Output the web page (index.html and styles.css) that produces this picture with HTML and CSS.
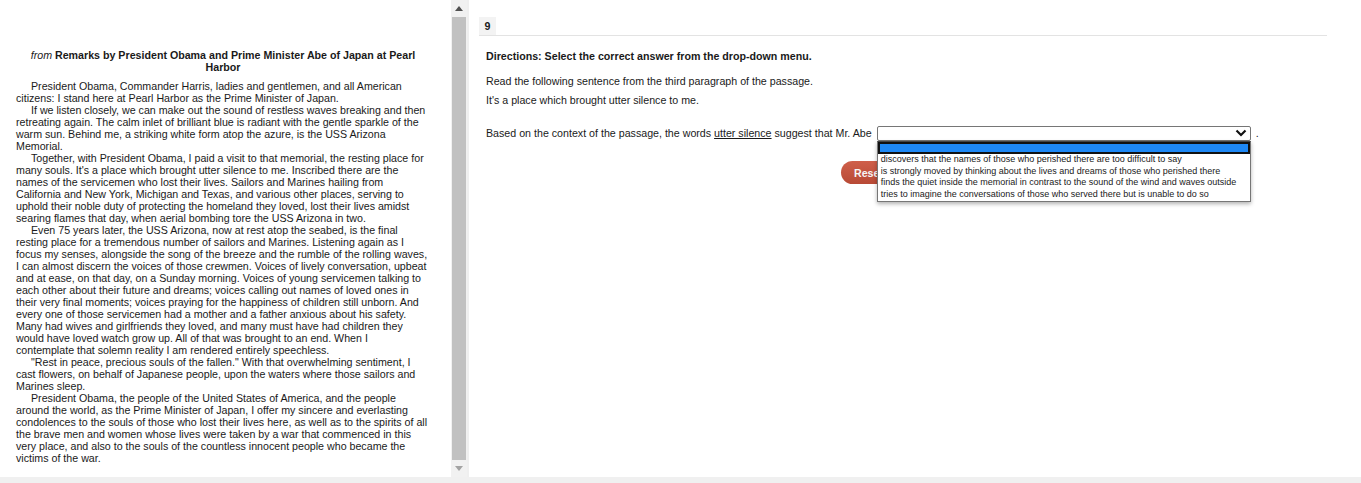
FILE: index.html
```html
<!DOCTYPE html>
<html lang="en">
<head>
  <meta charset="UTF-8">
  <title>Question 9</title>
  <link rel="stylesheet" href="styles.css">
</head>

<body>

<div class="panes">

  <!-- Reading passage -->
  <div class="passage-pane">
    <div class="passage">
      <h2 class="passage-title"><em>from</em> Remarks by President Obama and Prime Minister Abe of Japan at Pearl Harbor</h2>
      <p>President Obama, Commander Harris, ladies and gentlemen, and all American citizens: I stand here at Pearl Harbor as the Prime Minister of Japan.</p>
      <p>If we listen closely, we can make out the sound of restless waves breaking and then retreating again. The calm inlet of brilliant blue is radiant with the gentle sparkle of the warm sun. Behind me, a striking white form atop the azure, is the USS Arizona Memorial.</p>
      <p>Together, with President Obama, I paid a visit to that memorial, the resting place for many souls. It's a place which brought utter silence to me. Inscribed there are the names of the servicemen who lost their lives. Sailors and Marines hailing from California and New York, Michigan and Texas, and various other places, serving to uphold their noble duty of protecting the homeland they loved, lost their lives amidst searing flames that day, when aerial bombing tore the USS Arizona in two.</p>
      <p>Even 75 years later, the USS Arizona, now at rest atop the seabed, is the final resting place for a tremendous number of sailors and Marines. Listening again as I focus my senses, alongside the song of the breeze and the rumble of the rolling waves, I can almost discern the voices of those crewmen. Voices of lively conversation, upbeat and at ease, on that day, on a Sunday morning. Voices of young servicemen talking to each other about their future and dreams; voices calling out names of loved ones in their very final moments; voices praying for the happiness of children still unborn. And every one of those servicemen had a mother and a father anxious about his safety. Many had wives and girlfriends they loved, and many must have had children they would have loved watch grow up. All of that was brought to an end. When I contemplate that solemn reality I am rendered entirely speechless.</p>
      <p>"Rest in peace, precious souls of the fallen." With that overwhelming sentiment, I cast flowers, on behalf of Japanese people, upon the waters where those sailors and Marines sleep.</p>
      <p>President Obama, the people of the United States of America, and the people around the world, as the Prime Minister of Japan, I offer my sincere and everlasting condolences to the souls of those who lost their lives here, as well as to the spirits of all the brave men and women whose lives were taken by a war that commenced in this very place, and also to the souls of the countless innocent people who became the victims of the war.</p>
    </div>
    <div class="scrollbar">
      <svg class="arrow" width="16" height="17" viewBox="0 0 16 17"><path d="M4 11 L8 6 L12 11 Z" fill="#505050"/></svg>
      <div class="thumb"></div>
      <svg class="arrow" width="16" height="17" viewBox="0 0 16 17"><path d="M4 6 L12 6 L8 11 Z" fill="#a3a3a3"/></svg>
    </div>
  </div>

  <!-- Question -->
  <div class="question-pane">
    <div class="tabs"><span class="tab">9</span></div>
    <p class="directions">Directions: Select the correct answer from the drop-down menu.</p>
    <p class="line">Read the following sentence from the third paragraph of the passage.</p>
    <p class="line">It's a place which brought utter silence to me.</p>

    <div class="prompt">
      <span>Based on the context of the passage, the words <u>utter silence</u> suggest that Mr. Abe</span>
      <div class="dropdown">
        <div class="dropdown-box">
          <svg width="12" height="8" viewBox="0 0 12 8"><path d="M1.5 1.5 L6 6 L10.5 1.5" fill="none" stroke="#111" stroke-width="2.2"/></svg>
        </div>
        <ul class="dropdown-list">
          <li class="selected">&nbsp;</li>
          <li>discovers that the names of those who perished there are too difficult to say</li>
          <li>is strongly moved by thinking about the lives and dreams of those who perished there</li>
          <li>finds the quiet inside the memorial in contrast to the sound of the wind and waves outside</li>
          <li>tries to imagine the conversations of those who served there but is unable to do so</li>
        </ul>
      </div>
      <span>.</span>
    </div>

    <div class="buttons">
      <button class="reset">Reset</button>
    </div>
  </div>

</div>

<div class="footer-strip"></div>

</body>
</html>
```

FILE: styles.css
```css
html, body {
  margin: 0;
  padding: 0;
  height: 100%;
}

body {
  font-family: "Liberation Sans", Arial, sans-serif;
  font-size: 10.67px;
  color: #1a1a1a;
  background-color: #fff;
  overflow: hidden;
}

.panes {
  display: flex;
  height: 477px;
}

/* Left pane */
.passage-pane {
  display: flex;
  width: 467px;
  flex-shrink: 0;
  border-right: 2px solid #efefef;
}

.passage {
  width: 451px;
  box-sizing: border-box;
  padding: 49px 23px 0 16px;
  line-height: 12px;
  overflow: hidden;
}

.passage-title {
  font-size: 10.67px;
  line-height: 12px;
  font-weight: bold;
  text-align: center;
  margin: 0 -2px 7px 0;
}

.passage-title em {
  font-weight: normal;
}

.passage p {
  margin: 0;
  text-indent: 15px;
}

.scrollbar {
  width: 16px;
  display: flex;
  flex-direction: column;
  background-color: #f1f1f1;
}

.arrow {
  display: block;
  flex-shrink: 0;
}

.thumb {
  flex: 1;
  margin: 0 1px;
  background-color: #c1c1c1;
}

/* Right pane */
.question-pane {
  flex: 1;
  padding: 17px 34px 0 10px;
  min-width: 0;
}

.tabs {
  border-bottom: 1px solid #e3e3e3;
  height: 18px;
}

.tab {
  display: inline-block;
  width: 17px;
  height: 18px;
  line-height: 18px;
  text-align: center;
  background-color: #f3f3f3;
  font-weight: bold;
}

.directions {
  margin: 13px 0 11px 7px;
  line-height: 14px;
  font-weight: bold;
}

.line {
  margin: 0 0 5px 7px;
  line-height: 14px;
}

.prompt {
  display: flex;
  align-items: center;
  margin: 18px 0 0 7px;
  height: 16px;
  white-space: nowrap;
}

.dropdown {
  position: relative;
  width: 374px;
  margin: 0 5px 0 5px;
}

.dropdown-box {
  height: 13px;
  border: 1px solid #767676;
  border-radius: 2px;
  display: flex;
  align-items: center;
  justify-content: flex-end;
  padding-right: 3px;
  background-color: #fff;
}

.dropdown-list {
  position: absolute;
  top: 15px;
  left: 0;
  width: 100%;
  box-sizing: border-box;
  margin: 0;
  padding: 0;
  list-style: none;
  background-color: #fff;
  border: 1px solid #767676;
  border-top: 1px solid #444;
  box-shadow: 0 2px 4px rgba(0, 0, 0, 0.3);
  font-size: 9px;
  line-height: 11.7px;
  z-index: 2;
}

.dropdown-list li {
  padding: 0 3px;
  height: 11.7px;
}

.dropdown-list li.selected {
  background-color: #1e88f5;
  border: 2px solid #111;
  box-sizing: border-box;
  height: 12.4px;
}

.buttons {
  margin: 20px 0 0 362px;
}

.reset {
  display: block;
  width: 75px;
  height: 23px;
  border: none;
  border-radius: 12px;
  background: linear-gradient(#cf5f4a, #b84a36);
  color: #f6f6f6;
  font-family: inherit;
  font-size: 10.67px;
  font-weight: bold;
  padding: 0 13px;
  text-align: left;
}

.footer-strip {
  height: 6px;
  background-color: #f0f0f0;
}
```
